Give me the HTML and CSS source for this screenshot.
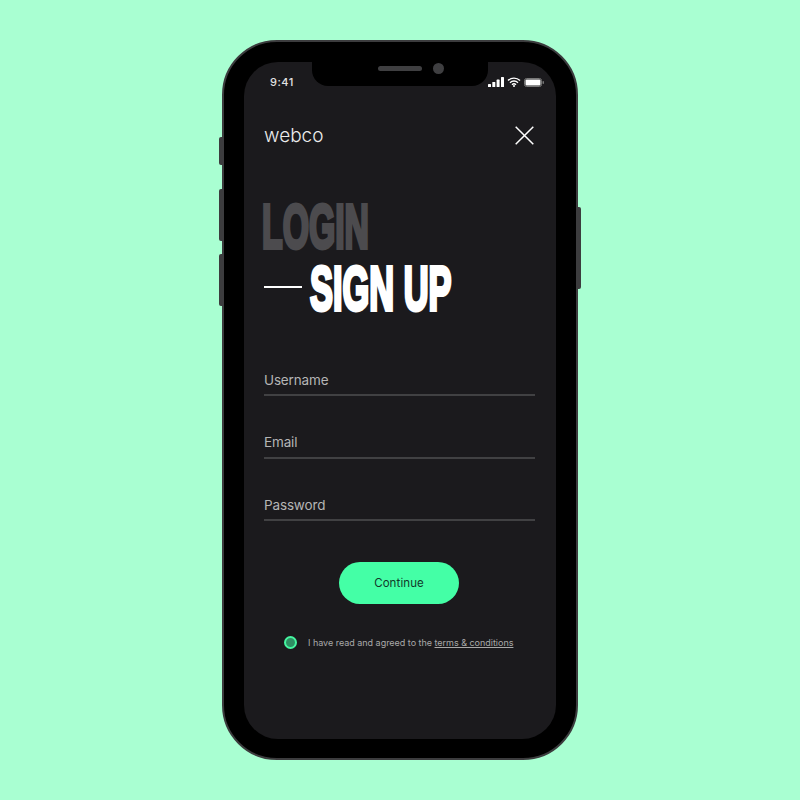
FILE: index.html
```html
<!DOCTYPE html>
<html lang="en">
<head>
<meta charset="utf-8">
<title>webco</title>
<link rel="stylesheet" href="styles.css">
</head>
<body>
<div class="phone">
  <span class="side side-mute"></span>
  <span class="side side-up"></span>
  <span class="side side-down"></span>
  <span class="side side-power"></span>
  <div class="notch"><span class="speaker"></span><span class="camera"></span></div>
  <div class="screen">
    <div class="status">
      <span class="time">9:41</span>
      <div class="status-icons">
        <svg class="signal" width="16" height="10" viewBox="0 0 16 10"><rect x="0" y="7" width="3" height="3" rx=".6"/><rect x="4.3" y="5" width="3" height="5" rx=".6"/><rect x="8.6" y="2.6" width="3" height="7.4" rx=".6"/><rect x="13" y="0" width="3" height="10" rx=".6"/></svg>
        <svg class="wifi" width="14" height="10" viewBox="0 0 14 10"><path d="M1 3.6a8.6 8.6 0 0 1 12 0M3 5.7a5.7 5.7 0 0 1 8 0M5 7.7a2.9 2.9 0 0 1 4 0" fill="none" stroke="#fff" stroke-width="1.4"/><circle cx="7" cy="9" r="1"/></svg>
        <svg class="battery" width="20" height="9" viewBox="0 0 20 9"><rect x=".5" y=".5" width="17" height="8" rx="2" fill="none" stroke="#777"/><rect x="1.5" y="1.5" width="15" height="6" rx="1"/><rect x="18.5" y="3" width="1.5" height="3" rx=".7" fill="#777"/></svg>
      </div>
    </div>
    <div class="content">
      <header class="top">
        <span class="logo">webco</span>
        <svg class="close" width="19" height="19" viewBox="0 0 19 19"><path d="M.7.7l17.6 17.6M18.3.7L.7 18.3" fill="none" stroke="#fff" stroke-width="1.5"/></svg>
      </header>
      <h1 class="titles">
        <span class="title title-login">LOGIN</span>
        <span class="title-row"><span class="dash"></span><span class="title title-signup">SIGN UP</span></span>
      </h1>
      <form class="form">
        <label class="field field-user">Username</label>
        <label class="field field-mail">Email</label>
        <label class="field">Password</label>
        <button class="continue" type="button">Continue</button>
        <div class="terms">
          <span class="radio"></span>
          <span class="terms-text">I have read and agreed to the <u>terms &amp; conditions</u></span>
        </div>
      </form>
    </div>
  </div>
</div>
</body>
</html>
```

FILE: styles.css
```css
* { box-sizing: border-box; }
html, body { margin: 0; height: 100%; }
body {
  background: #a9ffd2;
  display: flex;
  align-items: center;
  justify-content: center;
  font-family: Inter, "Liberation Sans", sans-serif;
}
.phone {
  position: relative;
  width: 356px;
  height: 720px;
  background: #000;
  border: 2px solid #3c3c3e;
  border-radius: 55px;
  padding: 20px 20px 19px;
}
.side { position: absolute; width: 3px; background: #3c3c3e; }
.side-mute { left: -5px; top: 95px; height: 28px; border-radius: 2px 0 0 2px; }
.side-up { left: -5px; top: 147px; height: 52px; border-radius: 2px 0 0 2px; }
.side-down { left: -5px; top: 212px; height: 52px; border-radius: 2px 0 0 2px; }
.side-power { right: -5px; top: 165px; height: 82px; border-radius: 0 2px 2px 0; }
.notch {
  position: absolute;
  left: 88px;
  top: 20px;
  width: 176px;
  height: 24px;
  background: #000;
  border-radius: 0 0 16px 16px;
}
.speaker { position: absolute; left: 66px; top: 4px; width: 44px; height: 5px; border-radius: 3px; background: #3f3f41; }
.camera { position: absolute; left: 121px; top: 1px; width: 11px; height: 11px; border-radius: 50%; background: #3f3f41; }
.screen {
  height: 100%;
  background: #1b1a1d;
  border-radius: 34px;
  overflow: hidden;
}
.status {
  display: flex;
  justify-content: space-between;
  align-items: center;
  height: 20px;
  padding: 0 12px 0 26px;
  position: relative;
  top: 10px;
}
.time { color: #e2e2e2; font-size: 11px; font-weight: 500; letter-spacing: .5px; }
.status-icons { display: flex; align-items: center; gap: 3px; }
.status-icons svg { display: block; fill: #fff; }
.content { padding: 0 21px 0 20px; }
.top {
  display: flex;
  justify-content: space-between;
  align-items: center;
  margin-top: 43px;
  height: 20px;
}
.logo { color: #ececec; font-size: 19px; font-weight: 300; letter-spacing: 0; }
.close { display: block; margin-right: 1px; }
.titles { margin: 0; padding-top: 49px; font-size: inherit; font-weight: inherit; }
.title {
  display: block;
  font-family: "Liberation Sans", sans-serif;
  font-weight: 700;
  font-size: 63px;
  line-height: 64px;
  transform-origin: left center;
  white-space: nowrap;
}
.title-login { color: #4c4b4e; -webkit-text-stroke: 4px #4c4b4e; transform: scaleX(.536); margin-left: -2px; }
.title-row { display: flex; align-items: center; margin-top: -2px; }
.dash { width: 38px; height: 2px; background: #fff; flex: none; margin: 0 8px 3px 0; }
.title-signup { color: #fff; -webkit-text-stroke: 4px #fff; transform: scaleX(.546); }
.form { display: block; margin-top: 40px; }
.field {
  display: block;
  height: 36px;
  margin-top: 26.5px;
  padding-top: 11px;
  color: #b5b5b5;
  font-size: 13.5px;
  letter-spacing: -.15px;
  line-height: 18px;
  border-bottom: 2px solid #414143;
}
.field:first-child { margin-top: 0; }
.field-mail { padding-top: 10px; }
.continue {
  display: block;
  width: 120px;
  height: 42px;
  margin: 41px 76px 0 75px;
  padding: 0;
  border: 0;
  border-radius: 21px;
  background: #44ffa6;
  color: #11392a;
  font-family: inherit;
  font-size: 11.5px;
  letter-spacing: .1px;
}
.terms { display: flex; align-items: center; gap: 11px; margin: 32px 0 0 20px; }
.radio {
  width: 13px;
  height: 13px;
  border-radius: 50%;
  background: #2e8f63;
  border: 2px solid #45f5a0;
  flex: none;
}
.terms-text { color: #a9a9a9; font-size: 9px; letter-spacing: -.02px; white-space: nowrap; }
```
